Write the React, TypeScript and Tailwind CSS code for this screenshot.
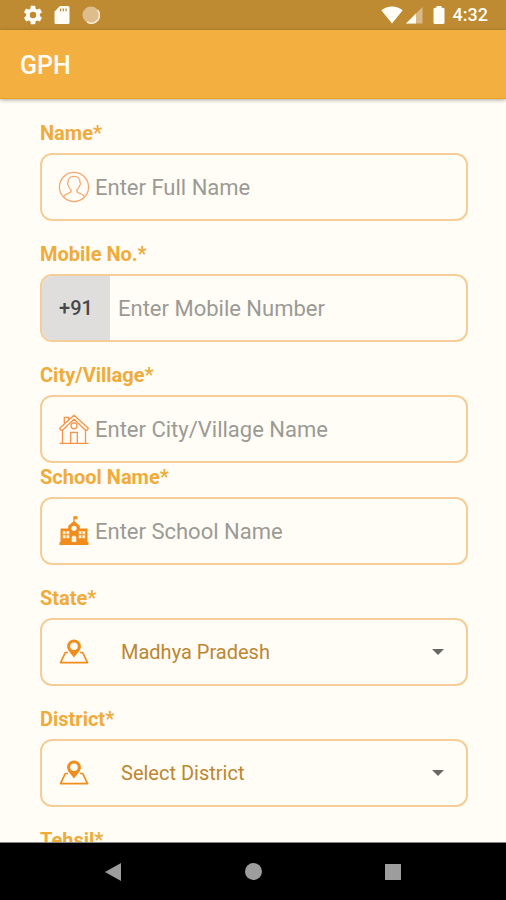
import type { ReactNode } from "react";

const FONT = "font-['Roboto','Liberation_Sans',sans-serif]";

function GearIcon() {
  return (
    <svg viewBox="0 0 24 24" className="size-[22px]" fill="#fffdf5" aria-hidden="true">
      <path d="M19.43 12.98c.04-.32.07-.64.07-.98s-.03-.66-.07-.98l2.11-1.65c.19-.15.24-.42.12-.64l-2-3.46c-.12-.22-.39-.3-.61-.22l-2.49 1c-.52-.4-1.08-.73-1.69-.98l-.38-2.65A.49.49 0 0 0 14 2h-4c-.25 0-.46.18-.49.42l-.38 2.65c-.61.25-1.17.59-1.69.98l-2.49-1c-.23-.09-.49 0-.61.22l-2 3.46c-.13.22-.07.49.12.64l2.11 1.65c-.04.32-.07.65-.07.98s.03.66.07.98l-2.11 1.65c-.19.15-.24.42-.12.64l2 3.46c.12.22.39.3.61.22l2.49-1c.52.4 1.08.73 1.69.98l.38 2.65c.03.24.24.42.49.42h4c.25 0 .46-.18.49-.42l.38-2.65c.61-.25 1.17-.59 1.69-.98l2.49 1c.23.09.49 0 .61-.22l2-3.46c.12-.22.07-.49-.12-.64l-2.11-1.65zM12 15.500a3.500 3.500 0 1 1 0-7 3.500 3.500 0 0 1 0 7z" />
    </svg>
  );
}

function CardIcon() {
  return (
    <svg viewBox="0 0 16 20" className="h-[20px] w-[16px]" fill="#fffdf5" aria-hidden="true">
      <path
        fillRule="evenodd"
        d="M6 1h8a1.500 1.500 0 0 1 1.500 1.500v15A1.500 1.500 0 0 1 14 19H2a1.500 1.500 0 0 1-1.500-1.500V6.500zM6 3.500v2.800H7.300V3.500zm2.700 0v2.800H10V3.500zm2.700 0v2.800h1.300V3.500z"
      />
    </svg>
  );
}

function SyncDotIcon() {
  return (
    <svg viewBox="0 0 18 18" className="size-[18px]" aria-hidden="true">
      <circle cx="9" cy="9" r="8.500" fill="#dcbd8b" />
      <path d="M15.500 4A8 8 0 0 1 5 15.900" fill="none" stroke="#f8ecd6" strokeWidth="1.600" />
    </svg>
  );
}

function StatusBar() {
  return (
    <div className="flex h-[30px] shrink-0 items-center bg-[#be8b32] pr-[18px] pl-[22px]">
      <GearIcon />
      <span className="ml-[10px]"><CardIcon /></span>
      <span className="ml-3"><SyncDotIcon /></span>
      <div className="ml-auto flex items-center">
        <svg viewBox="0 0 22 18" className="h-[18px] w-[22px]" fill="#fffdf5" aria-hidden="true">
          <path d="M11 17.500.3 4.300C3.200 1.800 7 .5 11 .5s7.800 1.300 10.700 3.800z" />
        </svg>
        <svg viewBox="0 0 18 18" className="ml-[2px] h-[18px] w-[18px]" aria-hidden="true">
          <path d="M17.500 1v16.500H1z" fill="#d9ba86" />
          <path d="M11 7.500v10H1z" fill="#fffdf5" />
        </svg>
        <svg viewBox="0 0 12 20" className="ml-[10px] h-[20px] w-[12px]" fill="#fffdf5" aria-hidden="true">
          <path d="M3.500 1h5v1.800H10A1.500 1.500 0 0 1 11.500 4.300v13.200A1.500 1.500 0 0 1 10 19H2a1.500 1.500 0 0 1-1.500-1.500V4.300A1.500 1.500 0 0 1 2 2.800h1.500z" />
        </svg>
        <span className="ml-2 text-lg font-medium text-[#fffdf5]">4:32</span>
      </div>
    </div>
  );
}

function PersonIcon() {
  return (
    <svg viewBox="0 0 32 32" className="size-8 shrink-0" fill="none" stroke="#f7a873" strokeWidth="1.300" aria-hidden="true">
      <circle cx="16" cy="16" r="14.600" />
      <path d="M5.500 26c.8-2.400 3.500-3.200 5.800-4 1.700-.6 2-1.700 1.700-3.200-1.600-1-2.300-2.700-2.500-4.300-1.200-.4-1.300-2.600-.4-3C9.700 7.500 12.300 5.300 16 5.300s6.300 2.200 5.900 6.200c.9.400.8 2.600-.4 3-.2 1.600-.9 3.300-2.500 4.300-.3 1.500 0 2.600 1.700 3.200 2.300.8 5 1.600 5.800 4" />
    </svg>
  );
}

function HouseIcon() {
  return (
    <svg viewBox="0 0 32 32" className="size-8 shrink-0" fill="none" stroke="#f5934a" strokeWidth="1.300" aria-hidden="true">
      <path d="M1.500 30.300h29M4.500 30V16.500M27.500 30V16.500" />
      <path d="M4.500 17.200H2.700l-1-2L16 2.200l14.300 13-1 2h-1.800L16 6.300z" strokeLinejoin="round" />
      <path d="M6.300 10.500V4.300h4.200V7M12.700 30V19.300h6.600V30" />
      <circle cx="16" cy="12.800" r="3" />
    </svg>
  );
}

function SchoolIcon() {
  return (
    <svg viewBox="0 0 32 32" className="size-8 shrink-0" aria-hidden="true">
      <path d="M15.300 8V1.300h4.200v3h-3V8z" fill="#f28c1c" />
      <path d="M2.500 13.500h7.700v-2.700L16 6l5.800 4.800v2.700h7.700V27h1v3h-29v-3h1z" fill="#f28c1c" />
      <circle cx="16" cy="13.300" r="2.600" fill="#fffdf5" />
      <path d="M13.700 27v-4.200c0-1.300 1-2.300 2.300-2.300s2.300 1 2.300 2.300V27zM4.800 16.300h2.800v3H4.800zM8.500 16.300h2.800v3H8.500zM4.800 20.200h2.800v3H4.800zM8.500 20.200h2.800v3H8.500zM20.700 16.300h2.800v3h-2.800zM24.400 16.300h2.800v3h-2.800zM20.700 20.200h2.800v3h-2.800zM24.400 20.200h2.800v3h-2.800z" fill="#fff3dc" />
    </svg>
  );
}

function MapPinIcon() {
  return (
    <svg viewBox="0 0 32 32" className="size-8 shrink-0" aria-hidden="true">
      <path d="M10 16.500H7.300L2.500 26.600h27l-4.800-10.100H22" fill="none" stroke="#f28c1c" strokeWidth="1.700" strokeLinejoin="round" />
      <path
        fillRule="evenodd"
        fill="#f28c1c"
        d="M16 21.500c-2.500-3.500-6.900-7-6.900-11.200a6.900 6.900 0 0 1 13.800 0c0 4.200-4.400 7.700-6.900 11.200zm0-7.500a3.800 3.800 0 1 0 0-7.600 3.800 3.800 0 0 0 0 7.600z"
      />
    </svg>
  );
}

function Field({ id, label, tight = false, children }: { id: string; label: string; tight?: boolean; children: ReactNode }) {
  return (
    <div className={tight ? "" : "mt-[19px] first:mt-0"}>
      <label htmlFor={id} className="mb-[6px] block h-7 text-[20px] leading-7 font-bold text-[#efab3b]">
        {label}
      </label>
      <div className="flex h-[68px] items-center overflow-hidden rounded-xl border-2 border-[#f5cd98]">{children}</div>
    </div>
  );
}

function TextBox({ id, placeholder, type = "text" }: { id: string; placeholder: string; type?: string }) {
  return (
    <input
      id={id}
      type={type}
      placeholder={placeholder}
      className="h-full min-w-0 flex-1 bg-transparent text-[22px] text-[#555] outline-none placeholder:text-[#9b9a95] placeholder:opacity-100"
    />
  );
}

function SelectBox({ id, options }: { id: string; options: string[] }) {
  return (
    <>
      <span className="ml-4"><MapPinIcon /></span>
      <select id={id} className="ml-[31px] h-full min-w-0 flex-1 appearance-none bg-transparent text-[20px] text-[#bd8632] outline-none">
        {options.map((option) => (
          <option key={option}>{option}</option>
        ))}
      </select>
      <svg viewBox="0 0 12 6" className="mr-[22px] h-[6px] w-[12px] shrink-0" fill="#686764" aria-hidden="true">
        <path d="M0 0h12L6 6z" />
      </svg>
    </>
  );
}

function NavBar() {
  return (
    <nav className="flex h-[58px] shrink-0 items-center justify-center gap-[108px] border-t border-[#888] bg-black">
      <button type="button" aria-label="Back" className="flex size-8 items-center justify-center">
        <svg viewBox="0 0 16 18" className="h-[18px] w-[16px]" fill="#9d9d9d"><path d="M16 0v18L0 9z" /></svg>
      </button>
      <button type="button" aria-label="Home" className="flex size-8 items-center justify-center">
        <span className="size-[17px] rounded-full bg-[#9d9d9d]" />
      </button>
      <button type="button" aria-label="Recent apps" className="flex size-8 items-center justify-center">
        <span className="size-4 bg-[#9d9d9d]" />
      </button>
    </nav>
  );
}

export default function App() {
  return (
    <div className={`flex h-screen flex-col bg-[#fffdf5] ${FONT}`}>
      <StatusBar />
      <header className="z-10 flex h-[69px] shrink-0 items-center border-b border-[#eda321] bg-[#f4af41] px-5 pt-1 shadow-[0_1px_4px_rgba(0,0,0,0.35)]">
        <h1 className="text-[25px] font-medium text-[#fffdf5]">GPH</h1>
      </header>
      <main className="min-h-0 flex-1 overflow-hidden pt-5 pr-[38px] pl-10">
        <form>
          <Field id="name" label="Name*">
            <span className="mr-[5px] ml-4"><PersonIcon /></span>
            <TextBox id="name" placeholder="Enter Full Name" />
          </Field>
          <Field id="mobile" label="Mobile No.*">
            <span className="mr-2 flex h-full w-[68px] items-center justify-center bg-[#e0dedd] text-[20px] font-medium text-[#484848]">+91</span>
            <TextBox id="mobile" type="tel" placeholder="Enter Mobile Number" />
          </Field>
          <Field id="city" label="City/Village*">
            <span className="mr-[5px] ml-4"><HouseIcon /></span>
            <TextBox id="city" placeholder="Enter City/Village Name" />
          </Field>
          <Field id="school" label="School Name*" tight>
            <span className="mr-[5px] ml-4"><SchoolIcon /></span>
            <TextBox id="school" placeholder="Enter School Name" />
          </Field>
          <Field id="state" label="State*">
            <SelectBox id="state" options={["Madhya Pradesh"]} />
          </Field>
          <Field id="district" label="District*">
            <SelectBox id="district" options={["Select District"]} />
          </Field>
          <Field id="tehsil" label="Tehsil*">
            <SelectBox id="tehsil" options={["Select Tehsil"]} />
          </Field>
        </form>
      </main>
      <NavBar />
    </div>
  );
}
